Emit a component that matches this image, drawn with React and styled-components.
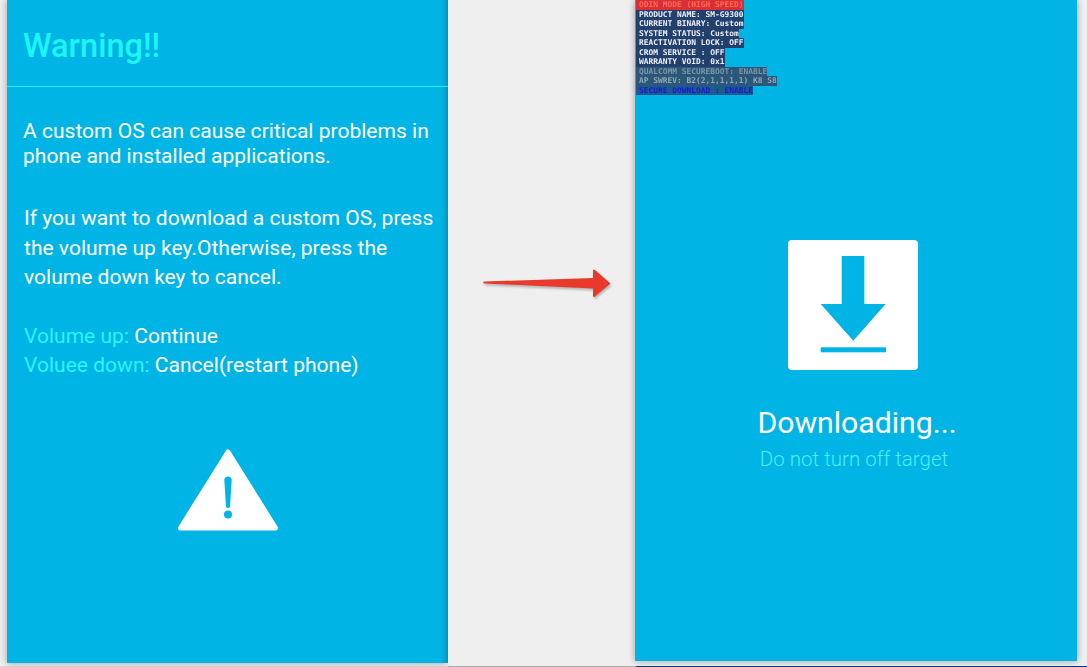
import React from 'react';
import styled, { createGlobalStyle } from 'styled-components';

const GlobalStyle = createGlobalStyle`
  html, body {
    margin: 0;
    padding: 0;
    background: #efefef;
    font-family: Roboto, "Liberation Sans", sans-serif;
  }
`;

const Page = styled.div`
  width: 1087px;
  height: 667px;
  overflow: hidden;
  display: flex;
  flex-direction: column;
  background: #efefef;
`;

const Row = styled.div`
  display: flex;
  height: 666px;
  padding-left: 7px;
`;

const Screen = styled.section`
  position: relative;
  z-index: ${(p) => p.$layer};
  width: ${(p) => p.$width}px;
  height: ${(p) => p.$height}px;
  flex-shrink: 0;
  background: #00b5e5;
  box-shadow: 0 0 7px rgba(0, 0, 0, 0.35), inset ${(p) => p.$inner}px 0 8px -8px rgba(0, 0, 0, 0.35);
`;

const WarningHead = styled.header`
  height: 87px;
  box-sizing: border-box;
  padding: 27px 0 0 16px;
  border-bottom: 1px solid #1ff5f0;
`;

const WarningTitle = styled.h1`
  margin: 0;
  font-size: 32.5px;
  line-height: 38px;
  font-weight: 500;
  color: #1cf5f5;
`;

const WarningBody = styled.div`
  padding: 31px 0 0 16px;
  color: #fff;
  font-size: 21.05px;
`;

const Para = styled.p`
  margin: 0 0 ${(p) => p.$after}px ${(p) => p.$indent || 0}px;
  line-height: ${(p) => p.$line}px;
`;

const KeyName = styled.span`
  color: #2af5f5;
`;

const TriangleWrap = styled.div`
  display: flex;
  justify-content: center;
  margin-top: 68px;
  padding-left: 1px;
`;

const Middle = styled.div`
  position: relative;
  z-index: 1;
  width: 187px;
  flex-shrink: 0;
  padding-top: 268px;
  padding-left: 34px;
  box-sizing: border-box;
  background: #efefef;
`;

const Arrow = styled.svg`
  display: block;
  filter: drop-shadow(1px 2px 1px rgba(0, 0, 0, 0.25));
  overflow: visible;
`;

const OdinBlock = styled.div`
  display: flex;
  flex-direction: column;
  align-items: flex-start;
  padding-left: 1px;
  font-family: "DejaVu Sans Mono", "Liberation Mono", monospace;
  font-size: 7.9px;
  font-weight: 700;
  line-height: 9.5px;
  white-space: pre;
  filter: blur(0.3px);
`;

const OdinLine = styled.div`
  padding: 0 0 0 3px;
  color: ${(p) => p.$color};
  background: ${(p) => p.$bg};
`;

const DownloadArea = styled.div`
  display: flex;
  flex-direction: column;
  align-items: center;
  margin-top: 145px;
  padding-left: 2px;
`;

const DownloadIcon = styled.svg`
  display: block;
  margin-left: -8px;
`;

const DownloadTitle = styled.div`
  margin-top: 33px;
  color: #fff;
  font-size: 30.2px;
  line-height: 40px;
  font-weight: 400;
`;

const DownloadSub = styled.div`
  margin-left: -6px;
  color: #4aeef4;
  font-size: 20.5px;
  line-height: 32px;
  font-weight: 300;
`;

const Strip = styled.div`
  height: 1px;
  background: linear-gradient(90deg, #d8d8d8 448px, #a8a8a8 448px, #a8a8a8 636px, #063f7c 636px);
`;

const odinLines = [
  ['ODIN MODE (HIGH SPEED)', '#ff6a4a', '#d8303a'],
  ['PRODUCT NAME: SM-G9300', '#eef0fa', '#22406c'],
  ['CURRENT BINARY: Custom', '#eef0fa', '#22406c'],
  ['SYSTEM STATUS: Custom', '#eef0fa', '#22406c'],
  ['REACTIVATION LOCK: OFF', '#eef0fa', '#22406c'],
  ['CROM SERVICE : OFF', '#eef0fa', '#22406c'],
  ['WARRANTY VOID: 0x1', '#eef0fa', '#22406c'],
  ['QUALCOMM SECUREBOOT: ENABLE', '#7e95a8', '#2b5878'],
  ['AP SWREV: B2(2,1,1,1,1) K8 S8', '#8ea6b8', '#2b5878'],
  ['SECURE DOWNLOAD : ENABLE', '#1a1ad0', '#1d5a90'],
];

function App() {
  return (
    <Page>
      <GlobalStyle />
      <Row>
        <Screen $width={441} $height={663} $layer={0} $inner={-8}>
          <WarningHead>
            <WarningTitle>Warning!!</WarningTitle>
          </WarningHead>
          <WarningBody>
            <Para $line={25} $after={35}>
              A custom OS can cause critical problems in
              <br />
              phone and installed applications.
            </Para>
            <Para $line={29.5} $after={29} $indent={1}>
              If you want to download a custom OS, press
              <br />
              the volume up key.Otherwise, press the
              <br />
              volume down key to cancel.
            </Para>
            <Para $line={29.5} $after={0} $indent={1}>
              <KeyName>Volume up:</KeyName> Continue
              <br />
              <KeyName>Voluee down:</KeyName> Cancel(restart phone)
            </Para>
          </WarningBody>
          <TriangleWrap>
            <svg width="104" height="84" viewBox="0 0 104 84">
              <path
                d="M52 4 L99.5 80 L4.5 80 Z"
                fill="#fff"
                stroke="#fff"
                strokeWidth="5"
                strokeLinejoin="round"
              />
              <path
                d="M48.3 32 Q48.5 28.5 52 28.5 Q55.5 28.5 55.7 32 L54 59 Q52 61 50 59 Z"
                fill="#00b5e5"
              />
              <circle cx="52" cy="66.5" r="4" fill="#00b5e5" />
            </svg>
          </TriangleWrap>
        </Screen>
        <Middle>
          <Arrow width="130" height="30" viewBox="0 0 130 30">
            <path
              d="M2 13.5 L111 10 L111 2.5 Q111.5 1 113 2 L128.5 15.5 L113 28.5 Q111.5 29.5 111 28 L111 20.5 L2 15.5 Q0.5 14.5 2 13.5 Z"
              fill="#e8392c"
            />
          </Arrow>
        </Middle>
        <Screen $width={442} $height={661} $layer={2} $inner={0}>
          <OdinBlock>
            {odinLines.map(([text, color, bg]) => (
              <OdinLine key={text} $color={color} $bg={bg}>
                {text}
              </OdinLine>
            ))}
          </OdinBlock>
          <DownloadArea>
            <DownloadIcon width="130" height="130" viewBox="0 0 130 130">
              <rect width="130" height="130" rx="4" fill="#fff" />
              <path d="M53.7 16 H76.3 V64 H97.7 L65.3 100.7 L32.7 64 H53.7 Z" fill="#00b5e5" />
              <rect x="32.7" y="107.3" width="65.3" height="5" fill="#00b5e5" />
            </DownloadIcon>
            <DownloadTitle>Downloading...</DownloadTitle>
            <DownloadSub>Do not turn off target</DownloadSub>
          </DownloadArea>
        </Screen>
      </Row>
      <Strip />
    </Page>
  );
}

export default App;
